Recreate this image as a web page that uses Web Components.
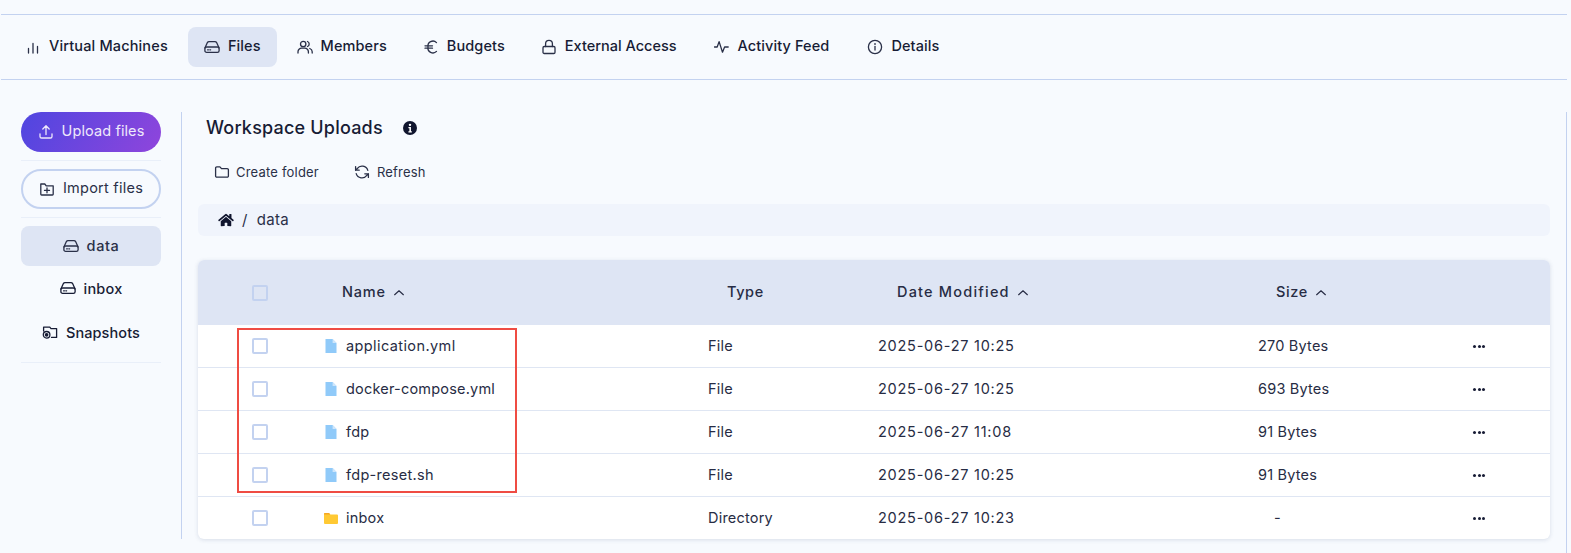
<!DOCTYPE html>
<html>
<head>
<meta charset="utf-8">
<title>Workspace files</title>
<style>
    html, body { margin: 0; background: #f7fafe; height: 100%; overflow: hidden; }
    body { font-family: Inter, "Noto Sans", sans-serif; color: #171c35; }
</style>
</head>
<body>
<workspace-page>
    <tab-bar slot="tabs">
        <tab-item icon="bars" style="letter-spacing:.15px">Virtual Machines</tab-item>
        <tab-item icon="drive" active style="letter-spacing:.1px">Files</tab-item>
        <tab-item icon="users" style="letter-spacing:.1px">Members</tab-item>
        <tab-item icon="euro" style="letter-spacing:.1px">Budgets</tab-item>
        <tab-item icon="lock">External Access</tab-item>
        <tab-item icon="activity" style="letter-spacing:.1px;margin-left:1px">Activity Feed</tab-item>
        <tab-item icon="info" style="letter-spacing:.1px;margin-left:2px">Details</tab-item>
    </tab-bar>
    <side-nav slot="side">
        <side-button variant="primary" icon="upload" style="letter-spacing:.1px">Upload files</side-button>
        <side-rule></side-rule>
        <side-button variant="outline" icon="folderplus" style="letter-spacing:.25px">Import files</side-button>
        <side-rule></side-rule>
        <side-button variant="item" icon="drive" active style="letter-spacing:.6px">data</side-button>
        <side-button variant="item" icon="drive" style="letter-spacing:.2px">inbox</side-button>
        <side-button variant="item" icon="snapshot" style="letter-spacing:.1px">Snapshots</side-button>
        <side-rule></side-rule>
    </side-nav>
    <file-browser slot="main" title="Workspace Uploads">
        <file-row header name="Name" type="Type" date="Date Modified" size="Size"></file-row>
        <file-row name="application.yml" type="File" date="2025-06-27 10:25" size="270 Bytes" style="--name-spacing:.4px"></file-row>
        <file-row name="docker-compose.yml" type="File" date="2025-06-27 10:25" size="693 Bytes"></file-row>
        <file-row name="fdp" type="File" date="2025-06-27 11:08" size="91 Bytes"></file-row>
        <file-row name="fdp-reset.sh" type="File" date="2025-06-27 10:25" size="91 Bytes" style="--name-spacing:.3px"></file-row>
        <file-row folder name="inbox" type="Directory" date="2025-06-27 10:23" size="-"></file-row>
    </file-browser>
</workspace-page>

<script>
const ICONS = {
    bars: '<path d="M3.5 14V9.5M8 14V4.5M12.5 14V7.5"/>',
    drive: '<path d="M.9 9 3.4 3.6A1.8 1.8 0 0 1 5 2.6h6a1.8 1.8 0 0 1 1.6 1L15.1 9"/><rect x=".9" y="8" width="14.2" height="5.4" rx="1.7"/><path d="M3.6 10.8h.8M5.8 10.8h.8"/>',
    users: '<circle cx="6.2" cy="5" r="2.7"/><path d="M1 14v-1.2a3.6 3.6 0 0 1 3.6-3.6h3.2a3.6 3.6 0 0 1 3.6 3.6V14"/><path d="M10.5 2.5a2.7 2.7 0 0 1 0 5M12.8 9.5a3.6 3.6 0 0 1 2.4 3.3V14"/>',
    euro: '<path d="M13.5 3.6A5 5 0 0 0 5 8a5 5 0 0 0 8.5 4.4M2 6.8h7.5M2 9.2h7.5"/>',
    lock: '<rect x="2" y="7.5" width="12" height="7" rx="1.2"/><path d="M4.6 7.5V4.8a3.4 3.4 0 0 1 6.8 0v2.7"/>',
    activity: '<path d="M.4 8h2.8l1.9-5.4 3.4 10.6L10.6 8h3.6"/>',
    info: '<circle cx="8" cy="8" r="6.6"/><path d="M8 7.4v3.6"/><path d="M8 4.9v.3" stroke-width="1.6"/>',
    upload: '<path d="M2 9.8v2.6a1.6 1.6 0 0 0 1.6 1.6h8.8a1.6 1.6 0 0 0 1.6-1.6V9.8M8 10.5V2M4.8 5 8 1.8 11.2 5"/>',
    folderplus: '<path d="M1.8 3h4l1.4 1.8h7v8.4a.8.8 0 0 1-.8.8H2.6a.8.8 0 0 1-.8-.8z"/><path d="M5.5 9.4h5M8 7v4.8"/>',
    snapshot: '<path d="M5 3.2h2.8l1.2 1.4h5.6v8.8H9.5M1.6 7V3.2H5"/><circle cx="4.6" cy="10.8" r="3.3"/><circle cx="4.6" cy="10.8" r="1.2" fill="currentColor"/>',
    folder: '<path d="M1.6 4A1.2 1.2 0 0 1 2.8 2.8h3.1l1.6 1.9h5.7a1.2 1.2 0 0 1 1.2 1.2v6.1a1.2 1.2 0 0 1-1.2 1.2H2.8a1.2 1.2 0 0 1-1.2-1.2z"/>',
    refresh: '<path d="M13.8 6.4A6 6 0 0 0 3.2 4.6L1.6 6.2M1.6 2.6v3.6h3.6M2.2 9.6a6 6 0 0 0 10.6 1.8l1.6-1.6M14.4 13.4V9.8h-3.6"/>',
    chevron: '<path d="M3 10 8 5.4l5 4.6"/>'
};

function icon(name, size) {
    return `<svg width="${size}" height="${size}" viewBox="0 0 16 16" fill="none" stroke="currentColor" stroke-width="1.3" stroke-linecap="round" stroke-linejoin="round" aria-hidden="true">${ICONS[name]}</svg>`;
}

class WorkspacePage extends HTMLElement {
    constructor() {
        super();
        this.attachShadow({ mode: "open" }).innerHTML = `
            <style>
                :host { display: block; height: 553px; padding-top: 14px; box-sizing: border-box; }
                .body {
                    display: flex; margin: 32px 4px 0 0; padding-left: 21px; height: 427px;
                    box-sizing: content-box; border-right: 1px solid #c3d2f0; padding-bottom: 14px;
                }
            </style>
            <slot name="tabs"></slot>
            <div class="body">
                <slot name="side"></slot>
                <slot name="main"></slot>
            </div>
        `;
    }
}

class TabBar extends HTMLElement {
    constructor() {
        super();
        this.attachShadow({ mode: "open" }).innerHTML = `
            <style>
                :host {
                    display: flex; gap: 4px; height: 40px; padding: 12px 8px;
                    margin: 0 4px 0 1px; border-top: 1px solid #c3d2f0; border-bottom: 1px solid #c3d2f0;
                }
            </style>
            <slot></slot>
        `;
    }
}

class TabItem extends HTMLElement {
    constructor() {
        super();
        this.attachShadow({ mode: "open" }).innerHTML = `
            <style>
                :host {
                    display: flex; align-items: center; gap: 8px; padding: 0 16px; border-radius: 8px;
                    font-size: 14.5px; font-weight: 500; color: #171c35;
                }
                :host([active]) { background: #dee5f4; }
                svg { flex: none; color: #2a3048; }
                slot { display: block; margin-bottom: 4px; }
            </style>
            ${icon(this.getAttribute("icon"), 16)}
            <slot></slot>
        `;
    }
}

class SideNav extends HTMLElement {
    constructor() {
        super();
        this.attachShadow({ mode: "open" }).innerHTML = `
            <style>
                :host {
                    display: block; width: 140px; padding-right: 20px; flex: none;
                    border-right: 1px solid #c3d2f0;
                }
            </style>
            <slot></slot>
        `;
    }
}

class SideRule extends HTMLElement {
    constructor() {
        super();
        this.attachShadow({ mode: "open" }).innerHTML = `
            <style>
                :host { display: block; height: 1px; margin: 8px 0; background: #e9eff9; }
            </style>
        `;
    }
}

class SideButton extends HTMLElement {
    constructor() {
        super();
        this.attachShadow({ mode: "open" }).innerHTML = `
            <style>
                :host {
                    display: flex; align-items: center; justify-content: center; gap: 8px;
                    height: 44px; box-sizing: border-box; border-radius: 8px;
                    font-size: 14.5px; font-weight: 500; color: #171c35;
                }
                :host([variant="primary"]) {
                    height: 40px; border-radius: 20px; color: #eee9fb; font-weight: 400;
                    background: linear-gradient(120deg, #4f46e0, #8f45dc);
                }
                :host([variant="outline"]) {
                    height: 40px; border-radius: 20px; border: 2px solid #c3d2f0;
                    font-weight: 400; color: #2a3048;
                }
                :host([active]) { height: 40px; background: #dee5f4; color: #2a3048; }
                slot { display: block; }
                :host([variant="primary"]) slot, :host([variant="outline"]) slot { margin-bottom: 4px; }
                :host([active]) slot { margin-bottom: 2px; }
                svg { flex: none; }
            </style>
            ${icon(this.getAttribute("icon"), 16)}
            <slot></slot>
        `;
    }
}

class FileBrowser extends HTMLElement {
    constructor() {
        super();
        const title = this.getAttribute("title") || "";
        this.attachShadow({ mode: "open" }).innerHTML = `
            <style>
                :host { display: block; flex: none; width: 1352px; margin-left: 16px; position: relative; }
                .head { display: flex; align-items: center; gap: 20px; height: 30px; margin-left: 8px; font-size: 18px; font-weight: 500; letter-spacing: .2px; }
                .info { width: 14px; height: 14px; margin-top: 2px; }
                .actions { display: flex; gap: 35px; margin: 14px 0 0 16px; height: 32px; align-items: center; font-size: 13px; letter-spacing: .2px; color: #2a3048; }
                .action { display: flex; align-items: center; gap: 6px; }
                .action + .action { gap: 7px; }
                .crumb {
                    display: flex; align-items: center; gap: 8px; height: 32px; margin-top: 16px; padding-left: 20px;
                    background: #f0f4fc; border-radius: 6px; font-size: 15px; letter-spacing: .3px; color: #2a3048;
                }
                .crumb span { margin-bottom: 2px; }
                .table {
                    margin-top: 24px; border-radius: 6px; overflow: hidden; background: #fff;
                    box-shadow: 0 1px 4px rgba(40, 60, 110, .15);
                }
                /* cadre d'annotation rouge par-dessus les lignes */
                .mark {
                    position: absolute; left: 39px; top: 216px; width: 276px; height: 161px;
                    border: 2px solid #ef4c43; pointer-events: none;
                }
            </style>
            <div class="head">
                <span>${title}</span>
                <svg class="info" viewBox="0 0 16 16"><circle cx="8" cy="8" r="8" fill="#10152e"/><circle cx="8" cy="4.4" r="1.4" fill="#fff"/><path d="M6.2 6.8h2.9v5h1v1.4H6.2v-1.4h1.1V8.2H6.2z" fill="#fff"/></svg>
            </div>
            <div class="actions">
                <span class="action">${icon("folder", 16)}Create folder</span>
                <span class="action">${icon("refresh", 16)}Refresh</span>
            </div>
            <div class="crumb">
                <svg width="16" height="14" viewBox="0 0 576 512" fill="#10152e"><path d="M280.4 148.3 96 300.1V464a16 16 0 0 0 16 16l112-.3a16 16 0 0 0 15.9-16V368a16 16 0 0 1 16-16h64a16 16 0 0 1 16 16v95.6a16 16 0 0 0 16 16l112 .4a16 16 0 0 0 16-16V300L295.7 148.3a12.2 12.2 0 0 0-15.3 0zM571.6 251.5 488 182.6V44a12 12 0 0 0-12-12h-56a12 12 0 0 0-12 12v72.6L318.5 43a48 48 0 0 0-61 0L4.3 251.5a12 12 0 0 0-1.6 16.9l25.5 31a12 12 0 0 0 16.9 1.6l235.2-193.7a12.2 12.2 0 0 1 15.3 0L530.9 301a12 12 0 0 0 16.9-1.6l25.5-31a12 12 0 0 0-1.7-17z"/></svg>
                <span>/</span><span style="margin-left:1px">data</span>
            </div>
            <div class="table"><slot></slot></div>
            <div class="mark"></div>
        `;
    }
}

class FileRow extends HTMLElement {
    constructor() {
        super();
        const a = (n) => this.getAttribute(n);
        const isHeader = this.hasAttribute("header");
        const sort = isHeader ? icon("chevron", 14) : "";
        const fileIcon = this.hasAttribute("folder")
            ? '<svg class="fi" width="14" height="14" viewBox="0 0 14 14"><path d="M0 3a1 1 0 0 1 1-1h4l1.3 1.4H13a1 1 0 0 1 1 1V12a1 1 0 0 1-1 1H1a1 1 0 0 1-1-1z" fill="#ffc933"/><path d="M0 3a1 1 0 0 1 1-1h4l1.3 1.4H0z" fill="#f5a623"/></svg>'
            : '<svg class="fi" width="14" height="14" viewBox="0 0 14 14"><path d="M1.5 0H8.6L12.5 3.9V14H1.5z" fill="#90caf9"/><path d="M8.6 0 12.5 3.9H8.6z" fill="#cfe6fb"/></svg>';
        const size = a("size") === "-" ? '<span style="margin-left:16px">-</span>' : `<span>${a("size")}</span>`;
        this.attachShadow({ mode: "open" }).innerHTML = `
            <style>
                :host {
                    display: grid; grid-template-columns: 126px 384px 170px 379px 213px 80px;
                    align-items: center; height: 43px; box-sizing: border-box;
                    font-size: 14.5px; letter-spacing: .2px; color: #272c44; border-bottom: 1px solid #dfe6f3;
                }
                :host(:last-child) { border-bottom: none; height: 42px; }
                :host([header]) {
                    height: 65px; background: #dee5f4; border-bottom: none;
                    font-weight: 500; letter-spacing: .6px; color: #272c44;
                }
                .box { width: 16px; height: 16px; margin-left: 54px; box-sizing: border-box; border: 2px solid #c3d2f0; border-radius: 2px; background: #fff; }
                :host([header]) .box { background: #dee5f4; }
                .cell { display: flex; align-items: center; gap: 8px; white-space: nowrap; }
                .cell span { margin-bottom: 1px; }
                .name span { letter-spacing: var(--name-spacing, .2px); }
                .size { padding-left: 1px; }
                .date span { letter-spacing: .75px; }
                :host([header]) .cell { padding-left: 19px; gap: 6px; }
                :host([header]) .cell span { margin-bottom: 3px; }
                :host([header]) .name { padding-left: 18px; }
                :host([header]) .name span { letter-spacing: .8px; }
                :host([header]) .date span { letter-spacing: 1.2px; }
                .dots { display: flex; gap: 1.5px; margin-left: 3px; }
                .dots i { width: 3px; height: 3px; border-radius: 50%; background: #171c35; }
            </style>
            <div class="box"></div>
            <div class="cell name">${isHeader ? "" : fileIcon}<span>${a("name")}</span>${sort}</div>
            <div class="cell"><span>${a("type")}</span></div>
            <div class="cell date"><span>${a("date")}</span>${sort}</div>
            <div class="cell size">${size}${sort}</div>
            ${isHeader ? "<div></div>" : '<div class="dots"><i></i><i></i><i></i></div>'}
        `;
    }
}

customElements.define("workspace-page", WorkspacePage);
customElements.define("tab-bar", TabBar);
customElements.define("tab-item", TabItem);
customElements.define("side-nav", SideNav);
customElements.define("side-rule", SideRule);
customElements.define("side-button", SideButton);
customElements.define("file-browser", FileBrowser);
customElements.define("file-row", FileRow);
</script>
</body>
</html>
